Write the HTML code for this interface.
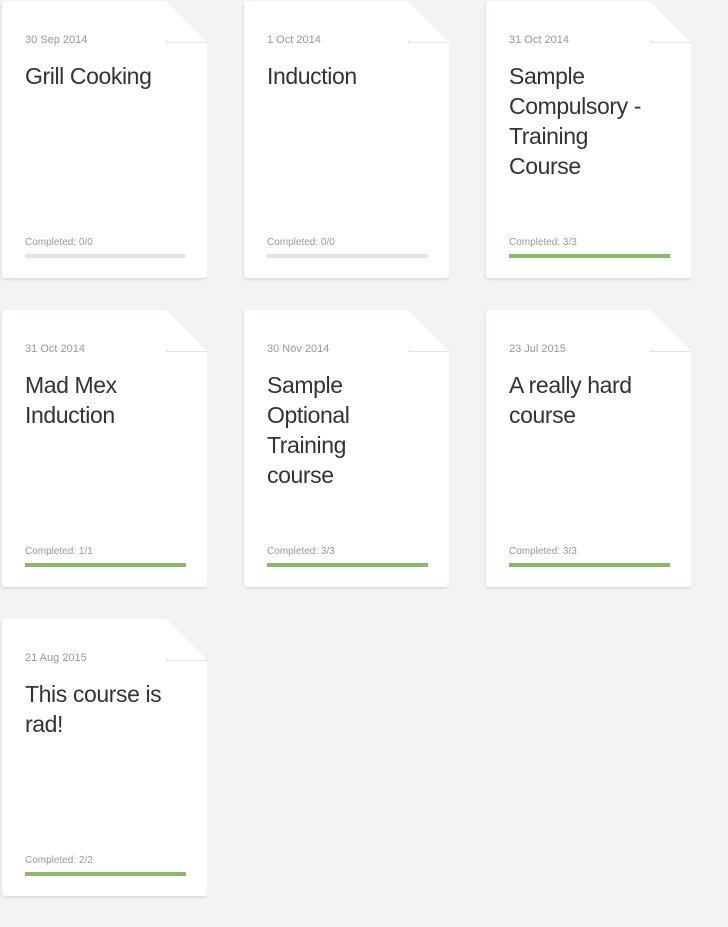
<!DOCTYPE html>
<html><head><meta charset="utf-8"><style>
html,body{margin:0;padding:0;background:#f2f3f5;width:728px;height:927px;overflow:hidden;font-family:"Liberation Sans",sans-serif;}
.card{position:absolute;width:205px;height:277px;}
.bg{position:absolute;inset:0;background:#fff;border-radius:3px;clip-path:polygon(0 0,164px 0,205px 41px,205px 100%,0 100%);}
.sh{position:absolute;inset:0;border-radius:3px;box-shadow:0 1px 3px rgba(0,0,0,.15);clip-path:polygon(0 0,164px 0,205px 41px,205px 110%,-5px 110%,-5px 0);}
.fold2{position:absolute;left:164px;top:0;width:42px;height:42px;background:#e3e4e6;clip-path:polygon(0 0,100% 100%,0 100%);}
.fold{position:absolute;left:164px;top:0;width:41px;height:41px;background:#fff;clip-path:polygon(0 0,100% 100%,0 100%);border-bottom-left-radius:3px;}
.date{position:absolute;left:23px;top:33px;font-size:11px;color:#999;}
.title{position:absolute;left:23px;top:60px;width:150px;font-size:23px;line-height:30px;color:#333;font-weight:300;letter-spacing:-0.4px;}
.comp{position:absolute;left:23px;top:236px;font-size:10px;color:#999;}
.bar{position:absolute;left:23px;top:253px;width:161px;height:4px;background:#e6e6e6;}
.bar.g{background:#8cb86a;}
</style></head><body>

<div class="card" style="left:2px;top:1px"><div class="sh"></div><div class="bg"></div><div class="fold2"></div><div class="fold"></div>
<div class="date">30 Sep 2014</div><div class="title">Grill Cooking</div><div class="comp">Completed: 0/0</div><div class="bar"></div></div>

<div class="card" style="left:244px;top:1px"><div class="sh"></div><div class="bg"></div><div class="fold2"></div><div class="fold"></div>
<div class="date">1 Oct 2014</div><div class="title">Induction</div><div class="comp">Completed: 0/0</div><div class="bar"></div></div>

<div class="card" style="left:486px;top:1px"><div class="sh"></div><div class="bg"></div><div class="fold2"></div><div class="fold"></div>
<div class="date">31 Oct 2014</div><div class="title">Sample Compulsory - Training Course</div><div class="comp">Completed: 3/3</div><div class="bar g"></div></div>

<div class="card" style="left:2px;top:310px"><div class="sh"></div><div class="bg"></div><div class="fold2"></div><div class="fold"></div>
<div class="date">31 Oct 2014</div><div class="title">Mad Mex Induction</div><div class="comp">Completed: 1/1</div><div class="bar g"></div></div>

<div class="card" style="left:244px;top:310px"><div class="sh"></div><div class="bg"></div><div class="fold2"></div><div class="fold"></div>
<div class="date">30 Nov 2014</div><div class="title">Sample Optional Training course</div><div class="comp">Completed: 3/3</div><div class="bar g"></div></div>

<div class="card" style="left:486px;top:310px"><div class="sh"></div><div class="bg"></div><div class="fold2"></div><div class="fold"></div>
<div class="date">23 Jul 2015</div><div class="title">A really hard course</div><div class="comp">Completed: 3/3</div><div class="bar g"></div></div>

<div class="card" style="left:2px;top:619px"><div class="sh"></div><div class="bg"></div><div class="fold2"></div><div class="fold"></div>
<div class="date">21 Aug 2015</div><div class="title">This course is rad!</div><div class="comp">Completed: 2/2</div><div class="bar g"></div></div>

</body></html>
